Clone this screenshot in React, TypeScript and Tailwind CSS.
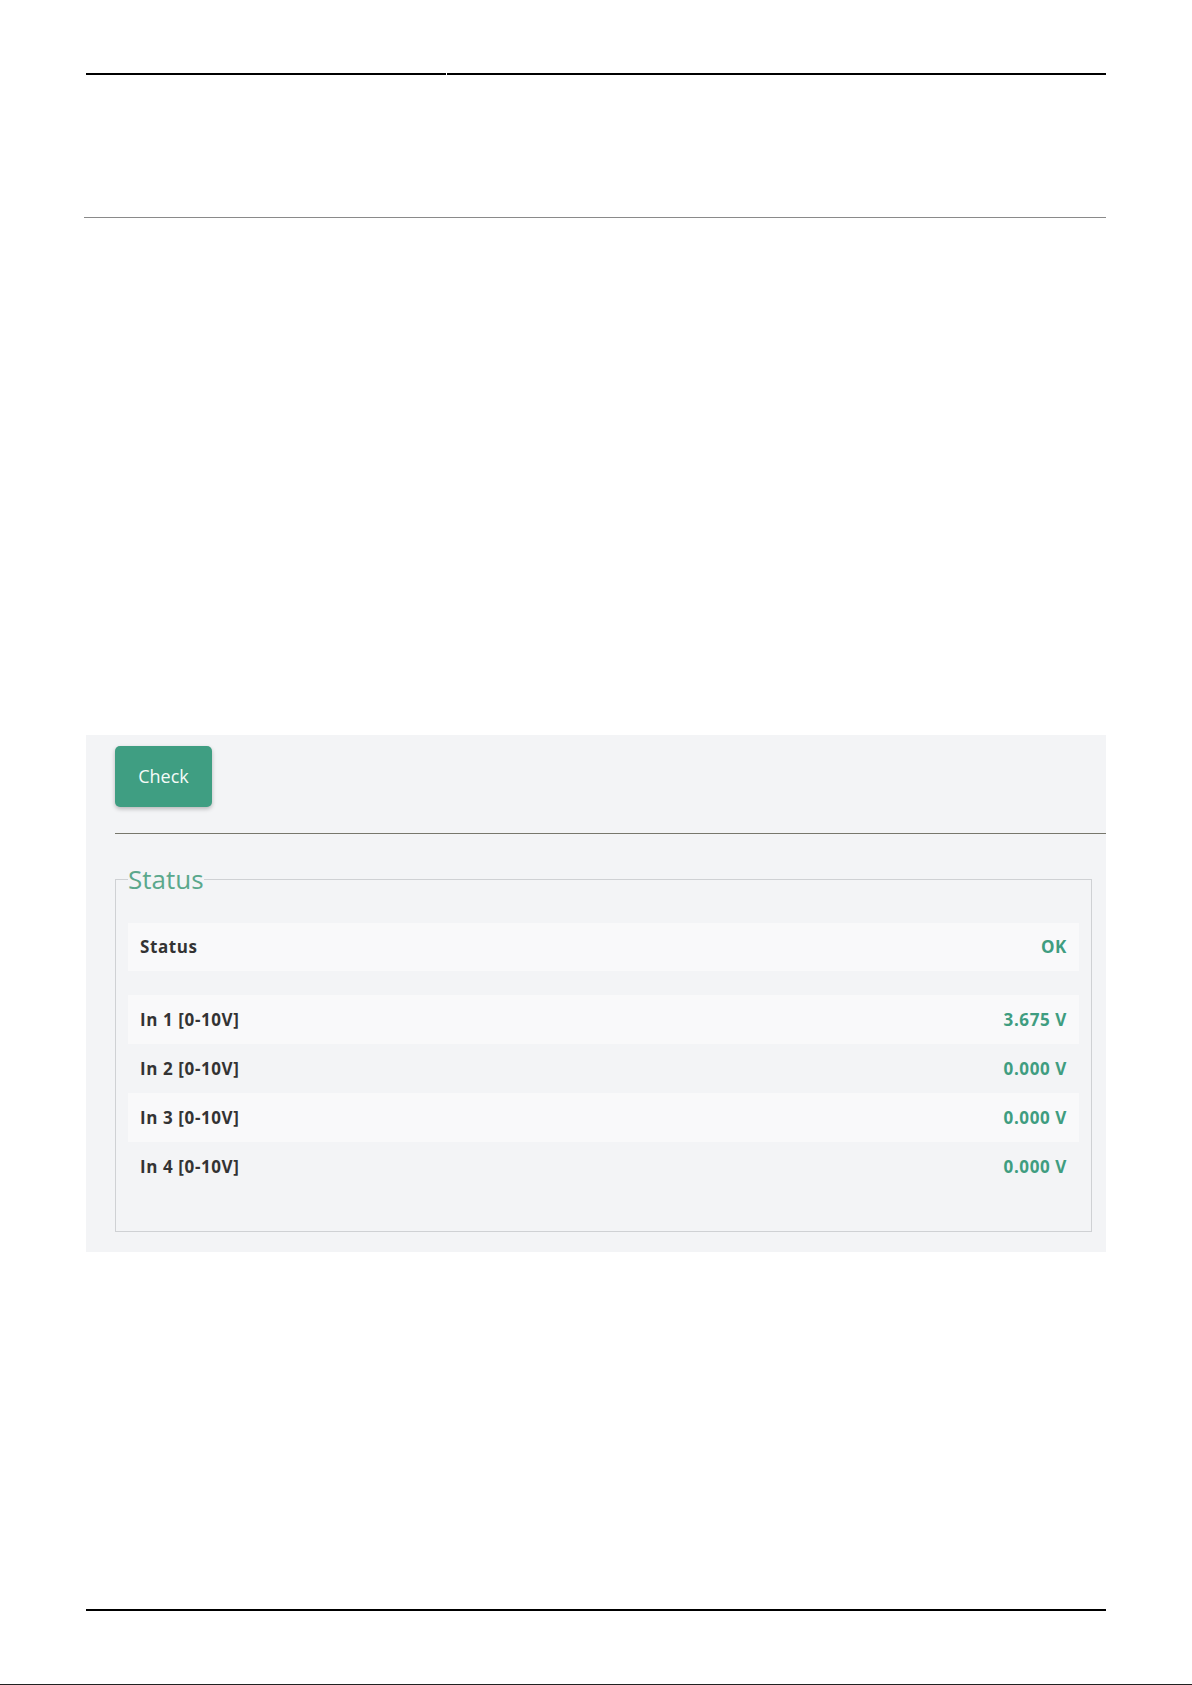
type Reading = {
  label: string;
  value: string;
};

const readings: Reading[] = [
  { label: 'In 1 [0-10V]', value: '3.675 V' },
  { label: 'In 2 [0-10V]', value: '0.000 V' },
  { label: 'In 3 [0-10V]', value: '0.000 V' },
  { label: 'In 4 [0-10V]', value: '0.000 V' },
];

function Row({ label, value, shaded, tall }: { label: string; value: string; shaded: boolean; tall: string }) {
  return (
    <div
      className={
        'flex items-center justify-between px-[12px] ' +
        tall +
        ' ' +
        (shaded ? 'bg-[#f9f9fa]' : 'bg-transparent')
      }
    >
      <span className="text-[17px] tracking-[0.6px] font-bold text-[#333333]">{label}</span>
      <span className="text-[17px] tracking-[0.6px] font-bold text-[#3f9d80]">{value}</span>
    </div>
  );
}

export default function App() {
  return (
    <div className="w-[1192px] h-[1685px] bg-white font-['Open_Sans','Liberation_Sans',sans-serif] overflow-hidden">
      {/* header table */}
      <div className="pt-[73px] px-[86px]">
        <div className="flex gap-[1px] h-[144px]">
          <div className="w-[360px] border-t-2 border-black" />
          <div className="flex-1 border-t-2 border-black" />
        </div>
        <div className="-ml-[2px] h-[1px] bg-[#8a8a8a]" />
      </div>

      {/* check panel */}
      <div className="mx-[86px] mt-[517px] bg-[#f3f4f6] pt-[11px] pl-[29px] pb-[20px]">
        <button className="h-[61px] w-[97px] rounded-[5px] bg-[#3f9e82] text-[18px] text-[#f4fbf8] shadow-[0_2px_4px_rgba(0,0,0,0.25)]">
          Check
        </button>
        <div className="mt-[26px] h-[1px] bg-[#77776c]" />

        <fieldset className="mt-[30px] mr-[14px] border border-[#cfd1d4] px-[12px] pb-[40px]">
          <legend className="text-[26px] leading-[30px] text-[#5aa88c]">Status</legend>
          <div className="mt-[29px] flex flex-col">
            <Row label="Status" value="OK" shaded={true} tall="h-[48px]" />
          </div>
          <div className="mt-[24px] flex flex-col">
            {readings.map((r, i) => (
              <Row key={i} label={r.label} value={r.value} shaded={i % 2 === 0} tall="h-[49px]" />
            ))}
          </div>
        </fieldset>
      </div>

      {/* footer rule */}
      <div className="mx-[86px] mt-[357px] h-[2px] bg-black" />
      <div className="mt-[73px] h-[1px] bg-[#222222]" />
    </div>
  );
}
